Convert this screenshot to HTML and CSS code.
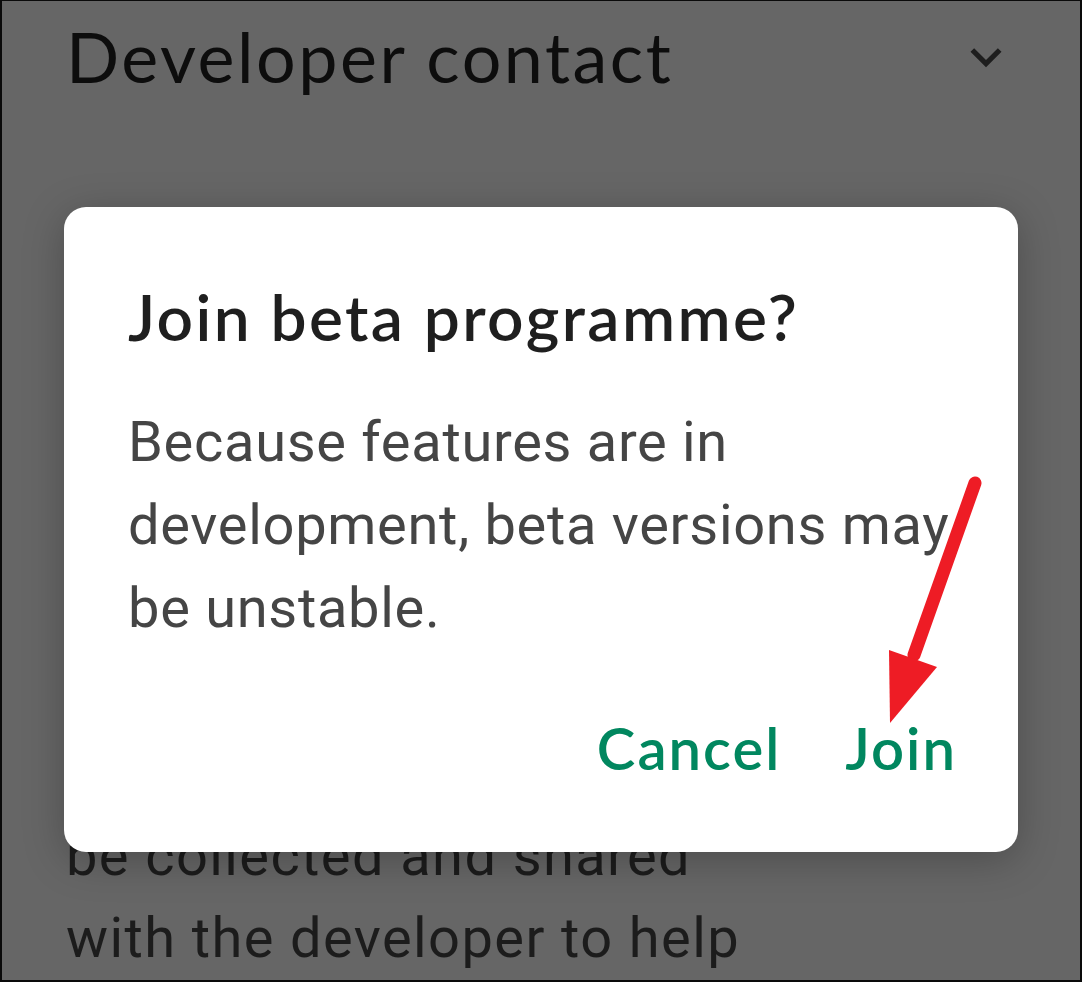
FILE: index.html
```html
<!DOCTYPE html>
<html>
<head>
<meta charset="utf-8">
<link rel="stylesheet" href="styles.css">
</head>
<body>
<div class="screen">
  <div class="section-head">
    <h2 class="section-title">Developer contact</h2>
    <svg class="chevron" viewBox="0 0 24 24"><path d="M7.41 8.59L12 13.17l4.59-4.58L18 10l-6 6-6-6 1.41-1.41z"/></svg>
  </div>
  <p class="section-text">be collected and shared<br>with the developer to help</p>

  <div class="dialog">
    <h1 class="dialog-title">Join beta programme?</h1>
    <p class="dialog-body">Because features are in development, beta versions may be unstable.</p>
    <div class="dialog-actions">
      <span class="btn">Cancel</span>
      <span class="btn">Join</span>
    </div>
  </div>

  <svg class="arrow" viewBox="0 0 1082 982" width="1082" height="982">
    <line x1="975" y1="483" x2="914" y2="655" stroke="#ee1c25" stroke-width="13" stroke-linecap="round"/>
    <polygon points="889,650 937,667 890,723" fill="#ee1c25"/>
  </svg>
</div>
</body>
</html>
```

FILE: styles.css
```css
html, body {
  margin: 0;
  padding: 0;
  background: #666666;
}
.screen {
  position: relative;
  width: 1082px;
  height: 982px;
  box-sizing: border-box;
  border: 2px solid #0a0a0a;
  border-top-width: 1px;
  background: #666666;
  overflow: hidden;
}
.section-head {
  display: flex;
  justify-content: space-between;
  align-items: flex-start;
  padding: 15px 63px 0 64px;
}
.section-title {
  margin: 0;
  font-family: "Lato", "Noto Sans", sans-serif;
  font-weight: 400;
  font-size: 70px;
  line-height: 80px;
  letter-spacing: 2.5px;
  color: #0d0d0d;
}
.chevron {
  width: 62px;
  height: 62px;
  margin-top: 10px;
  fill: #1e1e1e;
}
.section-text {
  margin: 719px 0 0 64px;
  font-family: "Roboto", sans-serif;
  font-size: 56px;
  line-height: 82px;
  letter-spacing: 1.4px;
  color: #1c1c1c;
}
.dialog {
  position: absolute;
  left: 62px;
  top: 206px;
  width: 954px;
  box-sizing: border-box;
  padding: 74px 61px 69px 64px;
  background: #ffffff;
  border-radius: 22px;
  box-shadow: 0 8px 40px rgba(0,0,0,0.25);
}
.dialog-title {
  margin: 0;
  font-family: "Lato", "Noto Sans", sans-serif;
  font-weight: 600;
  font-size: 64px;
  line-height: 72px;
  letter-spacing: 2.4px;
  color: #1f1f1f;
}
.dialog-body {
  margin: 48px 0 0;
  font-family: "Roboto", sans-serif;
  font-size: 56px;
  line-height: 83px;
  letter-spacing: 0.7px;
  color: #454545;
}
.dialog-actions {
  margin-top: 63px;
  display: flex;
  justify-content: flex-end;
  gap: 64px;
}
.btn {
  font-family: "Lato", "Noto Sans", sans-serif;
  font-weight: 600;
  font-size: 58px;
  line-height: 70px;
  letter-spacing: 2px;
  color: #01875f;
}
.arrow {
  position: absolute;
  left: -2px;
  top: -1px;
  pointer-events: none;
}
```
